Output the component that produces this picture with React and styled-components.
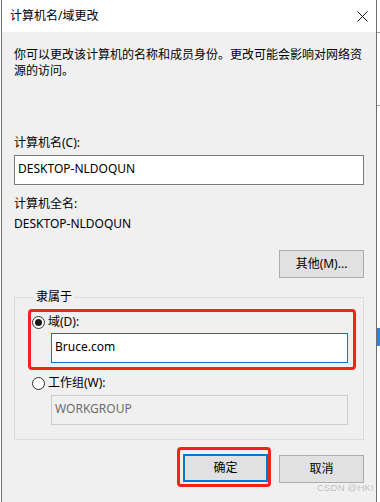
import React from 'react';
import styled, { createGlobalStyle } from 'styled-components';

const GlobalStyle = createGlobalStyle`
    body {
        margin: 0;
        background: #fff;
    }

    * {
        box-sizing: border-box;
    }
`;

const Page = styled.div`
    position: relative;
    width: 380px;
    height: 502px;
    overflow: hidden;
    background: #fff;
    font-family: 'Noto Sans', 'Noto Sans CJK SC', sans-serif;
    font-size: 12px;
    line-height: 16px;
    color: #000;
`;

const Window = styled.div`
    margin-left: 1px;
    width: 376px;
    height: 502px;
    border-left: 1px solid #6e6e6e;
    border-right: 1px solid #6e6e6e;
    display: flex;
    flex-direction: column;
`;

const TitleBar = styled.div`
    flex: none;
    height: 32px;
    display: flex;
    align-items: center;
    justify-content: space-between;
    padding: 0 8px;
    background: #fff;
`;

const Body = styled.div`
    flex: 1;
    display: flex;
    flex-direction: column;
    padding: 15px 12px 0;
    background: #f0f0f0;
`;

const Description = styled.p`
    margin: 0;
    width: 350px;
`;

const Label = styled.div`
    margin-top: ${(p) => p.$gap || 0}px;
`;

const TextBox = styled.div`
    display: flex;
    align-items: center;
    width: ${(p) => p.$width || 350}px;
    height: 30px;
    margin: ${(p) => p.$margin || '4px 0 0'};
    padding: 0 3px 2px;
    border: 1px solid ${(p) => (p.$focused ? '#0078d7' : p.$disabled ? '#cccccc' : '#7a7a7a')};
    background: ${(p) => (p.$disabled ? '#f0f0f0' : '#fff')};
    color: ${(p) => (p.$disabled ? '#6d6d6d' : '#000')};
`;

const Button = styled.div`
    display: flex;
    align-items: center;
    justify-content: center;
    width: 85px;
    height: 28px;
    margin-top: ${(p) => p.$top || 0}px;
    border: ${(p) => (p.$primary ? '2px solid #0078d7' : '1px solid #adadad')};
    background: #e1e1e1;
`;

const RightAlign = styled.div`
    display: flex;
    justify-content: flex-end;
    margin-top: 18px;
`;

const Group = styled.fieldset`
    margin: 11px 0 0;
    padding: 4px 7px 14px 13px;
    border: 1px solid #dcdcdc;
    min-width: 0;
`;

const Legend = styled.legend`
    margin-left: 6px;
    padding: 0 2px;
    line-height: 16px;
`;

const Highlight = styled.div`
    padding: ${(p) => p.$padding};
    border: 3px solid #f5221b;
    border-radius: 4px;
`;

const RadioRow = styled.div`
    display: flex;
    align-items: center;
    height: 16px;
    margin-top: ${(p) => p.$gap || 0}px;
    padding-left: ${(p) => p.$indent || 0}px;
`;

const Radio = styled.span`
    position: relative;
    width: 13px;
    height: 13px;
    margin-right: 3px;
    border: 1px solid #333;
    border-radius: 50%;
    background: #fff;

    &::after {
        content: '';
        display: ${(p) => (p.$checked ? 'block' : 'none')};
        position: absolute;
        left: 2px;
        top: 2px;
        width: 7px;
        height: 7px;
        border-radius: 50%;
        background: #1a1a1a;
    }
`;

const ButtonRow = styled.div`
    display: flex;
    justify-content: flex-end;
    align-items: flex-start;
    gap: 8px;
    margin-top: 7px;
`;

// the desktop behind the dialog shows through on the right edge
const Backdrop = styled.div`
    position: absolute;
    right: 0;
    top: ${(p) => p.$top}px;
    width: 3px;
    height: ${(p) => p.$height || 1}px;
    background: ${(p) => p.$color || '#a0a0a0'};
`;

const Watermark = styled.span`
    position: absolute;
    left: 317px;
    top: 482px;
    font-family: 'Liberation Sans', sans-serif;
    font-size: 9.5px;
    line-height: 12px;
    letter-spacing: 0.2px;
    color: #bcbcbc;
    text-shadow: 0 0 1px #fff;
`;

const CloseIcon = () => (
    <svg width="11" height="11" viewBox="0 0 11 11">
        <path d="M0.5 0.5 L10.5 10.5 M10.5 0.5 L0.5 10.5" stroke="#111" strokeWidth="1" fill="none" />
    </svg>
);

const App = () => (
    <Page>
        <GlobalStyle />
        <Window>
            <TitleBar>
                <span>计算机名/域更改</span>
                <CloseIcon />
            </TitleBar>
            <Body>
                <Description>
                    你可以更改该计算机的名称和成员身份。更改可能会影响对网络资源的访问。
                </Description>
                <Label $gap={56}>计算机名(C):</Label>
                <TextBox>DESKTOP-NLDOQUN</TextBox>
                <Label $gap={11}>计算机全名:</Label>
                <Label $gap={4}>DESKTOP-NLDOQUN</Label>
                <RightAlign>
                    <Button>其他(M)...</Button>
                </RightAlign>
                <Group>
                    <Legend>隶属于</Legend>
                    <Highlight $padding="2px 0 4px 0">
                        <RadioRow $indent={1}>
                            <Radio $checked />
                            域(D):
                        </RadioRow>
                        <TextBox $focused $width={297} $margin="3px 0 0 20px">
                            Bruce.com
                        </TextBox>
                    </Highlight>
                    <RadioRow $gap={5} $indent={4}>
                        <Radio />
                        工作组(W):
                    </RadioRow>
                    <TextBox $disabled $width={297} $margin="4px 0 0 23px">
                        WORKGROUP
                    </TextBox>
                </Group>
                <ButtonRow>
                    <Highlight $padding="4px 0 2px 3px">
                        <Button $primary>确定</Button>
                    </Highlight>
                    <Button $top={8}>取消</Button>
                </ButtonRow>
            </Body>
        </Window>
        <Backdrop $top={32} />
        <Backdrop $top={105} />
        <Backdrop $top={328} $height={18} $color="#3b7fc4" />
        <Watermark>CSDN @HK!</Watermark>
    </Page>
);

export default App;
